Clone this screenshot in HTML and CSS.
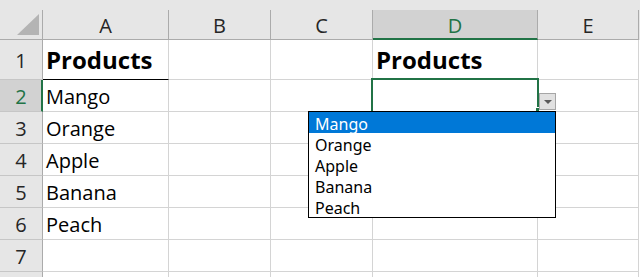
FILE: index.html
```html
<!DOCTYPE html>
<html>
<head>
<meta charset="utf-8">
<link rel="stylesheet" href="styles.css">
</head>
<body>
<div class="sheet">
  <div class="colheads">
    <div class="hd c-h corner"><svg width="42" height="29" viewBox="0 0 42 29"><polygon points="17,25 39,25 39,4" fill="#b4b4b4"/></svg></div>
    <div class="hd c-a">A</div>
    <div class="hd c-b">B</div>
    <div class="hd c-c">C</div>
    <div class="hd c-d sel">D</div>
    <div class="hd c-e">E</div>
  </div>

  <div class="row r1">
    <div class="rn c-h">1</div>
    <div class="cell c-a bold under">Products</div>
    <div class="cell c-b"></div>
    <div class="cell c-c"></div>
    <div class="cell c-d bold">Products</div>
    <div class="cell c-e"></div>
  </div>
  <div class="row">
    <div class="rn c-h sel">2</div>
    <div class="cell c-a">Mango</div>
    <div class="cell c-b"></div>
    <div class="cell c-c"></div>
    <div class="cell c-d"></div>
    <div class="cell c-e"></div>
  </div>
  <div class="row">
    <div class="rn c-h">3</div>
    <div class="cell c-a">Orange</div>
    <div class="cell c-b"></div>
    <div class="cell c-c"></div>
    <div class="cell c-d"></div>
    <div class="cell c-e"></div>
  </div>
  <div class="row">
    <div class="rn c-h">4</div>
    <div class="cell c-a">Apple</div>
    <div class="cell c-b"></div>
    <div class="cell c-c"></div>
    <div class="cell c-d"></div>
    <div class="cell c-e"></div>
  </div>
  <div class="row">
    <div class="rn c-h">5</div>
    <div class="cell c-a">Banana</div>
    <div class="cell c-b"></div>
    <div class="cell c-c"></div>
    <div class="cell c-d"></div>
    <div class="cell c-e"></div>
  </div>
  <div class="row">
    <div class="rn c-h">6</div>
    <div class="cell c-a">Peach</div>
    <div class="cell c-b"></div>
    <div class="cell c-c"></div>
    <div class="cell c-d"></div>
    <div class="cell c-e"></div>
  </div>
  <div class="row">
    <div class="rn c-h">7</div>
    <div class="cell c-a"></div>
    <div class="cell c-b"></div>
    <div class="cell c-c"></div>
    <div class="cell c-d"></div>
    <div class="cell c-e"></div>
  </div>
  <div class="row">
    <div class="rn c-h"></div>
    <div class="cell c-a"></div>
    <div class="cell c-b"></div>
    <div class="cell c-c"></div>
    <div class="cell c-d"></div>
    <div class="cell c-e"></div>
  </div>

  <div class="selection"></div>
  <div class="handle"></div>
  <div class="ddbtn"><span class="tri"></span></div>
  <ul class="dropdown">
    <li class="active">Mango</li>
    <li>Orange</li>
    <li>Apple</li>
    <li>Banana</li>
    <li>Peach</li>
  </ul>
</div>
</body>
</html>
```

FILE: styles.css
```css
* { box-sizing: border-box; }
html, body { margin: 0; padding: 0; }
body {
  width: 640px;
  height: 277px;
  overflow: hidden;
  background: #fff;
  font-family: "Open Sans", "Noto Sans", sans-serif;
  color: #000;
}
.sheet {
  position: relative;
  width: 640px;
  height: 277px;
  overflow: hidden;
}
.colheads {
  display: flex;
  padding-top: 10px;
  height: 40px;
  background: #e6e6e6;
}
.c-h { width: 43px; flex: none; }
.c-a { width: 126px; flex: none; }
.c-b { width: 102px; flex: none; }
.c-c { width: 102px; flex: none; }
.c-d { width: 165px; flex: none; }
.c-e { width: 101px; flex: none; }

.hd {
  height: 30px;
  border-right: 1px solid #ababab;
  border-bottom: 1px solid #ababab;
  display: flex;
  justify-content: center;
  align-items: center;
  padding-top: 2px;
  font-size: 20px;
  line-height: 27px;
  color: #262626;
}
.hd.corner { padding: 0; align-items: flex-start; }
.hd.corner svg { display: block; }
.hd.sel {
  background: #d2d2d2;
  color: #217346;
  border-bottom: 2px solid #217346;
  padding-top: 3px;
}

.row {
  display: flex;
  height: 32px;
}
.row.r1 { height: 40px; }

.rn {
  background: #e6e6e6;
  border-right: 1px solid #ababab;
  border-bottom: 1px solid #c6c6c6;
  display: flex;
  justify-content: center;
  align-items: center;
  padding-top: 2px;
  font-size: 20px;
  line-height: 27px;
  color: #262626;
}
.rn.sel {
  background: #d2d2d2;
  color: #217346;
  border-right: 2px solid #217346;
  padding-left: 1px;
}

.cell {
  border-right: 1px solid #d4d4d4;
  border-bottom: 1px solid #d4d4d4;
  display: flex;
  align-items: flex-end;
  padding: 0 3px 1px 3px;
  font-size: 20px;
  line-height: 27px;
  white-space: nowrap;
}
.cell.bold {
  font-weight: 700;
  font-size: 24px;
  line-height: 32px;
  padding-bottom: 3px;
  padding-left: 3px;
}
.cell.under { border-bottom: 1px solid #000; }

.selection {
  position: absolute;
  left: 371px;
  top: 78px;
  width: 168px;
  height: 36px;
  border: 2px solid #217346;
}
.handle {
  position: absolute;
  left: 535px;
  top: 107px;
  width: 5px;
  height: 5px;
  background: #217346;
  border: 1px solid #fff;
}
.ddbtn {
  position: absolute;
  left: 539px;
  top: 93px;
  width: 17px;
  height: 17px;
  background: #e1e1e1;
  border: 1px solid #a6a6a6;
  display: flex;
  justify-content: center;
  align-items: center;
}
.ddbtn .tri {
  width: 0;
  height: 0;
  border-left: 4px solid transparent;
  border-right: 4px solid transparent;
  border-top: 4px solid #5a5a5a;
  margin-top: 1px;
}
.dropdown {
  position: absolute;
  left: 308px;
  top: 111px;
  width: 248px;
  margin: 0;
  padding: 0;
  list-style: none;
  background: #fff;
  border: 1px solid #000;
  font-family: "Noto Sans", "Open Sans", sans-serif;
  font-size: 16px;
  color: #000;
}
.dropdown li {
  height: 21px;
  padding: 3px 0 0 6px;
  line-height: 18px;
  white-space: nowrap;
}
.dropdown li.active {
  background: #0078d7;
  color: #fff;
}
```
